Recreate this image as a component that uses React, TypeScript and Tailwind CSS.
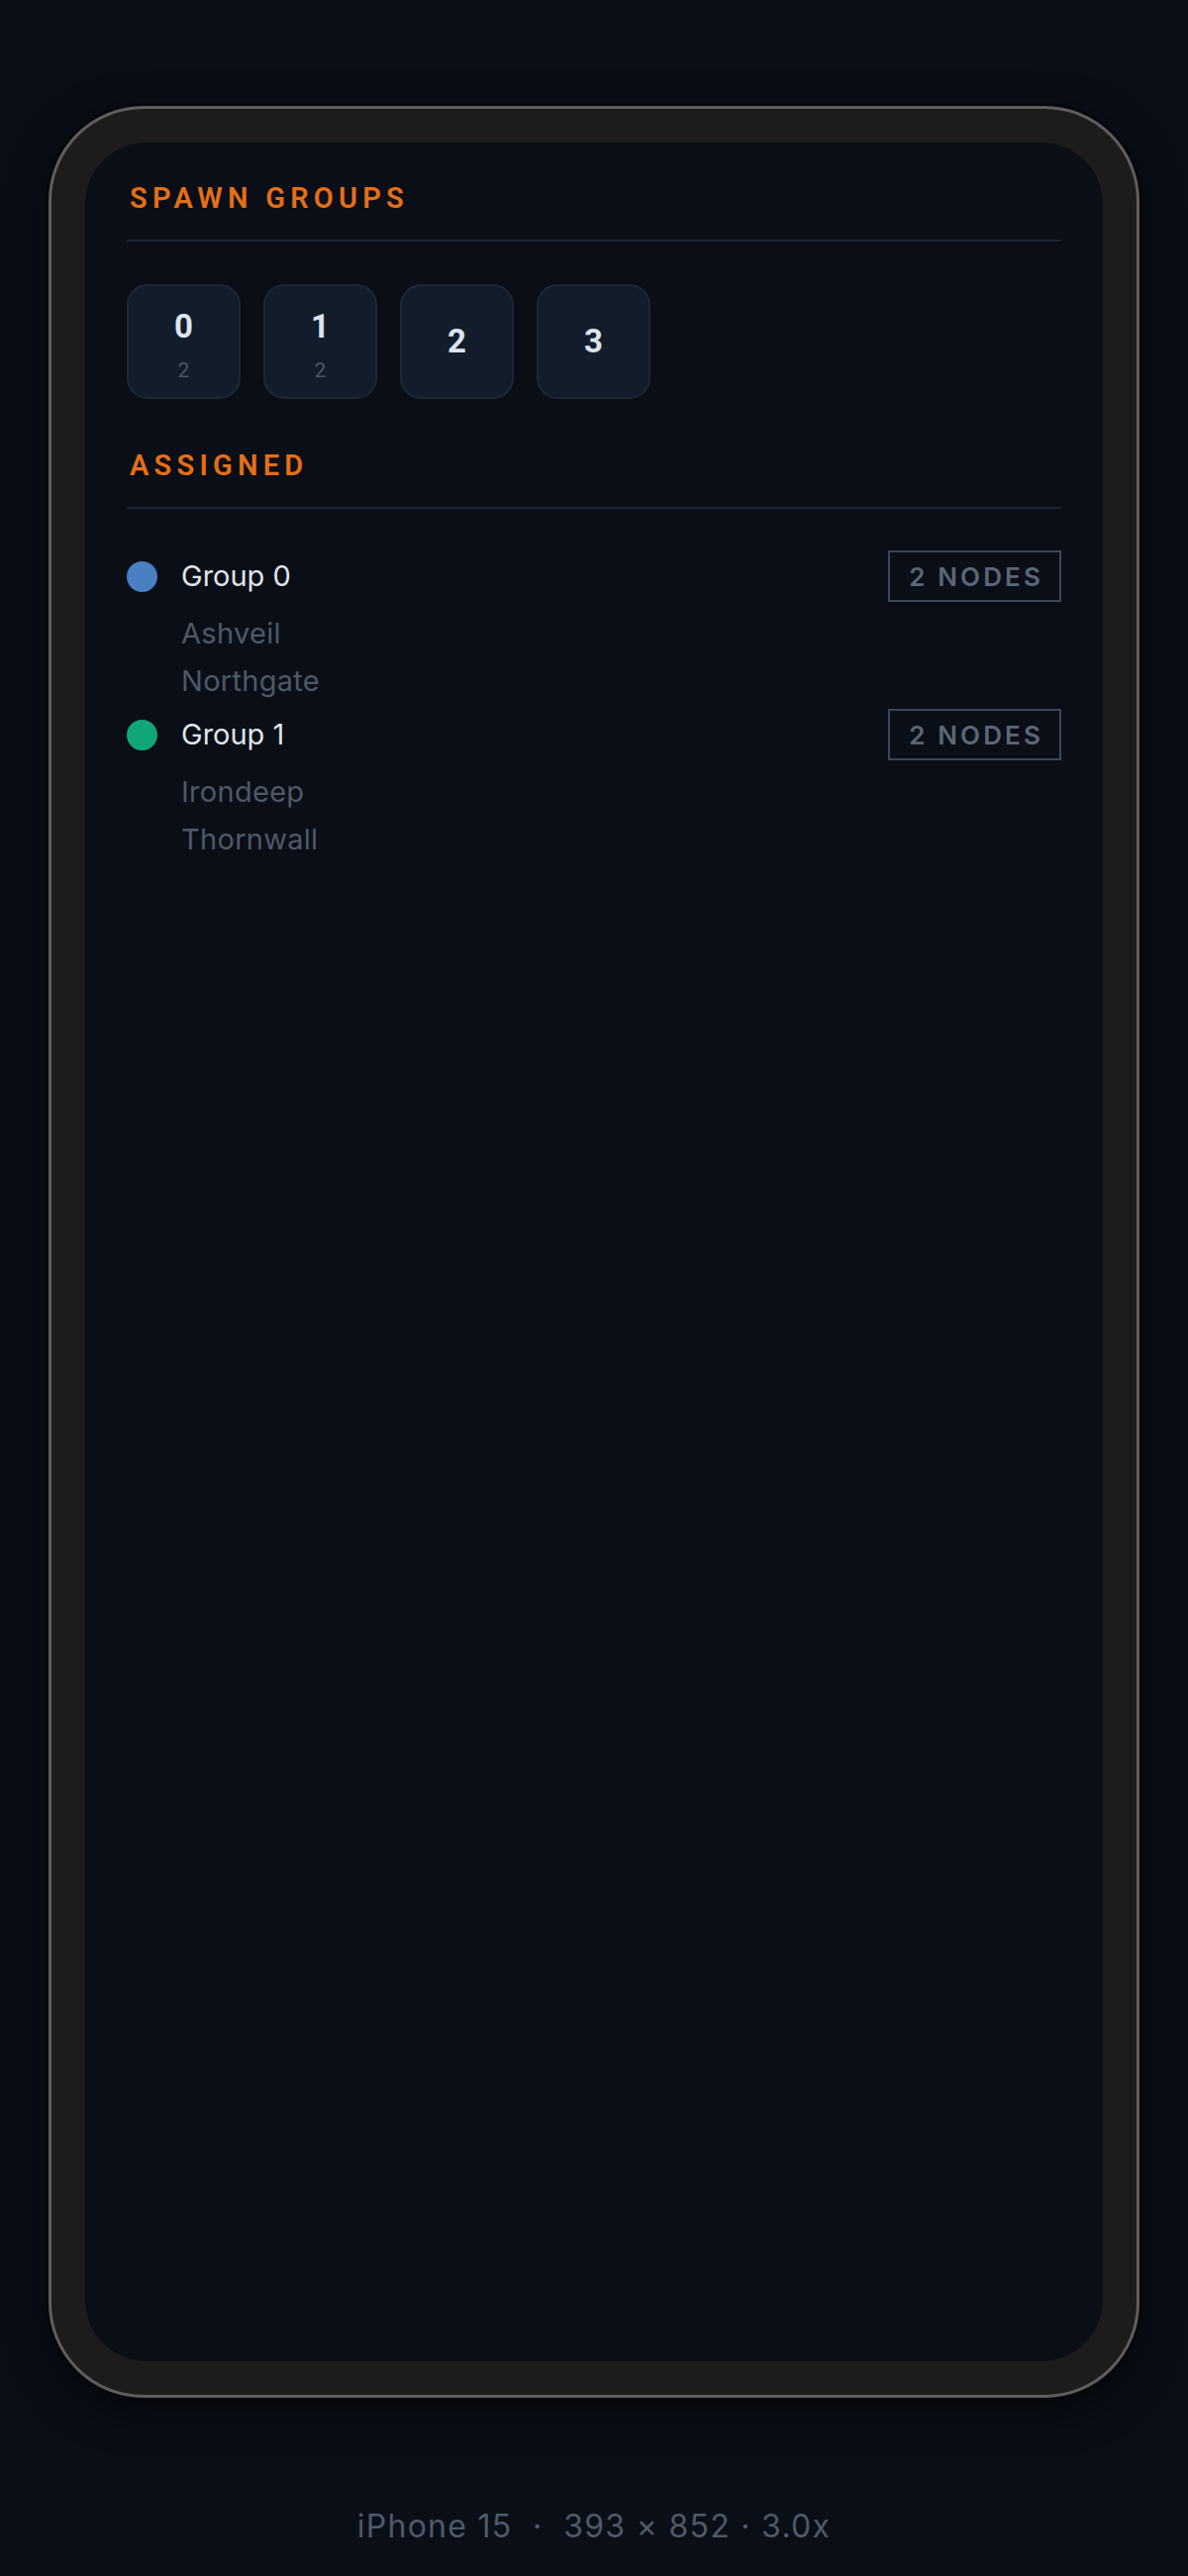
import React from "react";

const groups = [
  { name: "Group 0", color: "bg-[#4a7fc1]", nodes: ["Ashveil", "Northgate"] },
  { name: "Group 1", color: "bg-[#11a67a]", nodes: ["Irondeep", "Thornwall"] },
];

const boxes = [
  { n: "0", sub: "2" },
  { n: "1", sub: "2" },
  { n: "2", sub: "" },
  { n: "3", sub: "" },
];

function Heading({ children }: { children: React.ReactNode }) {
  return (
    <div>
      <div
        className="pl-[3px] text-[29px] leading-[36px] font-semibold tracking-[0.18em] text-[#e46f17]"
        style={{ fontFamily: "Roboto, 'Liberation Sans', sans-serif" }}
      >
        {children}
      </div>
      <div className="mt-[24px] h-[2px] bg-[#1c2431]" />
    </div>
  );
}

export default function App() {
  return (
    <div className="min-h-[2602px] w-full bg-[#0a0e17] flex flex-col items-center pt-[107px]">
      <div className="w-[1102px] h-[2315px] rounded-[96px] border-[3px] border-[#5e5e5e] bg-[#1c1c1c] p-[34px] shadow-[0_0_0_3px_#05070b,0_12px_40px_rgba(0,0,0,0.6)]">
        <div className="h-full rounded-[62px] bg-[#0a0e17] px-[42px] pt-[38px]">
          <Heading>SPAWN GROUPS</Heading>

          <div className="mt-[43px] flex gap-[23px]">
            {boxes.map((b) => (
              <div
                key={b.n}
                className="w-[115px] h-[116px] rounded-[21px] border-2 border-[#1d2737] bg-[#131c2a] flex flex-col items-center justify-center"
                style={{ fontFamily: "Roboto, 'Liberation Sans', sans-serif" }}
              >
                {b.sub ? (
                  <div className="flex flex-col items-center pt-[7px]">
                    <div className="text-[33px] leading-[36px] font-bold text-[#dbe4ef]">{b.n}</div>
                    <div className="mt-[14px] text-[21px] leading-[24px] text-[#4a5566]">{b.sub}</div>
                  </div>
                ) : (
                  <div className="text-[33px] leading-[36px] font-bold text-[#dbe4ef]">{b.n}</div>
                )}
              </div>
            ))}
          </div>

          <div className="mt-[49px]">
            <Heading>ASSIGNED</Heading>
          </div>

          <div className="mt-[42px] flex flex-col gap-[4px]">
            {groups.map((g) => (
              <div key={g.name}>
                <div className="h-[52px] flex items-center justify-between">
                  <div className="flex items-center gap-[24px]">
                    <div className={`w-[31px] h-[31px] rounded-full ${g.color}`} />
                    <div
                      className="text-[29px] leading-[36px] text-[#dfe5ec]"
                      style={{ fontFamily: "Inter, 'Noto Sans', sans-serif" }}
                    >
                      {g.name}
                    </div>
                  </div>
                  <div
                    className="h-[52px] border-2 border-[#3b4756] pl-[19px] pr-[16px] flex items-center text-[26px] font-semibold tracking-[0.12em] text-[#5a6778]"
                    style={{ fontFamily: "Inter, 'Noto Sans', sans-serif" }}
                  >
                    2 NODES
                  </div>
                </div>
                <div className="mt-[8px] pl-[55px] flex flex-col">
                  {g.nodes.map((n) => (
                    <div
                      key={n}
                      className="text-[29px] leading-[48px] tracking-[0.01em] text-[#4d5969]"
                      style={{ fontFamily: "Inter, 'Noto Sans', sans-serif" }}
                    >
                      {n}
                    </div>
                  ))}
                </div>
              </div>
            ))}
          </div>
        </div>
      </div>

      <div
        className="mt-[111px] text-[32px] leading-[38px] tracking-[0.04em] text-[#4d5a6b] whitespace-pre"
        style={{ fontFamily: "Inter, 'Noto Sans', sans-serif" }}
      >
        {"iPhone 15  ·  393 × 852 · 3.0x"}
      </div>
    </div>
  );
}
